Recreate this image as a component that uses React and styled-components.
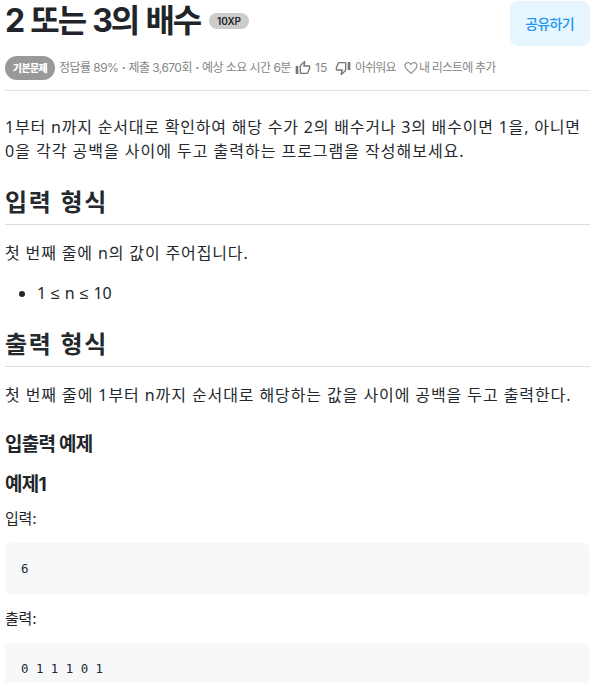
import styled, { createGlobalStyle } from 'styled-components'

const GlobalStyle = createGlobalStyle`
  * {
    box-sizing: border-box;
  }
  body {
    margin: 0;
    background: #fff;
    color: #24292e;
    overflow: hidden;
  }
`
const ui = `Inter, "Noto Sans CJK KR", sans-serif`
const prose = `"Noto Sans", "Noto Sans CJK KR", sans-serif`

const Page = styled.main`
  height: 683px;
  overflow: hidden;
  padding: 1px 1px 0 5px;
  font-family: ${ui};
`
const Header = styled.header`
  display: flex;
  justify-content: space-between;
  height: 55px;
`
const TitleRow = styled.div`
  display: flex;
  height: 40px;
`
const Title = styled.h1`
  margin: 0;
  width: 204px;
  color: #212529;
  font-size: 32px;
  font-weight: 700;
  line-height: 40px;
  letter-spacing: -2.1px;
  word-spacing: 1.8px;
  white-space: nowrap;
`
const XpBadge = styled.span`
  width: 40px;
  height: 16px;
  margin-top: 12px;
  border-radius: 8px;
  background: #ccc;
  color: #212529;
  font-size: 10px;
  font-weight: 600;
  line-height: 17px;
  text-align: center;
`
const ShareButton = styled.button`
  width: 80px;
  height: 45px;
  padding: 0 1px 2px 0;
  border: 0;
  border-radius: 8px;
  background: #e7f5ff;
  color: #2196f3;
  font-family: ${ui};
  font-size: 14px;
  font-weight: 500;
  letter-spacing: -0.7px;
`
const Meta = styled.div`
  display: flex;
  align-items: center;
  height: 35px;
  padding-bottom: 11px;
  border-bottom: 1px solid #dee2e6;
  color: #868686;
`
const LevelTag = styled.span`
  width: 50px;
  height: 24px;
  margin-right: 4px;
  border-radius: 12px;
  background: #999;
  color: #fff;
  font-size: 10px;
  font-weight: 900;
  line-height: 24px;
  letter-spacing: -0.6px;
  text-align: center;
`
const MetaText = styled.span`
  width: ${(p) => p.$width}px;
  font-size: 12px;
  line-height: 24px;
  letter-spacing: ${(p) => p.$spacing || 0}px;
  white-space: nowrap;
`
const Dot = styled.b`
  margin: 0 0.5px;
`
const MetaIcon = styled.svg`
  flex: none;
  width: 16px;
  height: 16px;
  margin-right: ${(p) => p.$gap}px;
  fill: ${(p) => p.$color || '#757575'};
`
const Article = styled.article`
  padding-top: 24px;
  font-family: ${prose};
`
const Paragraph = styled.p`
  margin: 0 0 16px;
  font-size: 16px;
  line-height: 24px;
  letter-spacing: 0.8px;
  white-space: nowrap;
`
const Line = styled.span`
  display: block;
  letter-spacing: ${(p) => p.$spacing}px;
`
const SectionTitle = styled.h2`
  height: 38px;
  margin: 24px 0 16px;
  border-bottom: 1px solid #d8dee4;
  font-size: 24px;
  font-weight: 700;
  line-height: 30px;
  letter-spacing: 1.7px;
`
const List = styled.ul`
  margin: 0 0 16px;
  padding-left: 32px;
  font-size: 16px;
  line-height: 24px;
`
const Sign = styled.span`
  margin: 0 0.8px;
  font-family: "Liberation Sans", sans-serif;
  line-height: 1;
`
const ExampleTitle = styled.h3`
  margin: 0 0 16px;
  color: #212529;
  font-size: 19px;
  font-weight: 700;
  line-height: 24px;
  letter-spacing: -0.75px;
`
const Examples = styled.section`
  padding-top: 10px;
`
const Label = styled.div`
  height: 24px;
  margin-top: -6px;
  color: #212529;
  font-size: 15px;
  line-height: 24px;
  letter-spacing: -0.2px;
`
const Sample = styled.pre`
  height: 52px;
  margin: 12px 0 18px;
  padding: 16px;
  border-radius: 6px;
  background: #f6f8fa;
  color: #24292e;
  font-family: "DejaVu Sans Mono", monospace;
  font-size: 12.4px;
  line-height: 20px;
`

export default function App() {
  return (
    <>
      <GlobalStyle />
      <Page>
        <Header>
          <TitleRow>
            <Title>2 또는 3의 배수</Title>
            <XpBadge>10XP</XpBadge>
          </TitleRow>
          <ShareButton>공유하기</ShareButton>
        </Header>
        <Meta>
          <LevelTag>기본문제</LevelTag>
          <MetaText $width={236} $spacing={-0.55}>
            정답률 89% <Dot>·</Dot> 제출 3,670회 <Dot>·</Dot> 예상 소요 시간 6분
          </MetaText>
          <MetaIcon $gap={4} viewBox="0 0 24 24">
            <path d="M9 21h9c.83 0 1.54-.5 1.84-1.22l3.02-7.05c.09-.23.14-.47.14-.73v-2c0-1.1-.9-2-2-2h-6.31l.95-4.57.03-.32c0-.41-.17-.79-.44-1.06L14.17 1 7.58 7.59C7.22 7.95 7 8.45 7 9v10c0 1.1.9 2 2 2zM9 9l4.34-4.34L12 10h9v2l-3 7H9V9zM1 9h4v12H1z" />
          </MetaIcon>
          <MetaText $width={20}>15</MetaText>
          <MetaIcon $gap={4} viewBox="0 0 24 24">
            <path d="M15 3H6c-.83 0-1.54.5-1.84 1.22l-3.02 7.05c-.09.23-.14.47-.14.73v2c0 1.1.9 2 2 2h6.31l-.95 4.57-.03.32c0 .41.17.79.44 1.06L9.83 23l6.59-6.59c.36-.36.58-.86.58-1.41V5c0-1.1-.9-2-2-2zm0 12l-4.34 4.34L12 14H3v-2l3-7h9v10zm4-12h4v12h-4z" />
          </MetaIcon>
          <MetaText $width={48} $spacing={-0.9}>아쉬워요</MetaText>
          <MetaIcon $gap={0} $color="#999" viewBox="0 0 24 24">
            <path d="M16.5 3c-1.74 0-3.41.81-4.5 2.09C10.91 3.81 9.24 3 7.5 3 4.42 3 2 5.42 2 8.5c0 3.78 3.4 6.86 8.55 11.54L12 21.35l1.45-1.32C18.6 15.36 22 12.28 22 8.5 22 5.42 19.58 3 16.5 3zm-4.4 15.55l-.1.1-.1-.1C7.14 14.24 4 11.39 4 8.5 4 6.5 5.5 5 7.5 5c1.54 0 3.04.99 3.57 2.36h1.87C13.46 5.99 14.96 5 16.5 5c2 0 3.5 1.5 3.5 3.5 0 2.89-3.14 5.74-7.9 10.05z" />
          </MetaIcon>
          <MetaText $width={80} $spacing={-0.85}>내 리스트에 추가</MetaText>
        </Meta>
        <Article>
          <Paragraph>
            <Line $spacing={0.8}>1부터 n까지 순서대로 확인하여 해당 수가 2의 배수거나 3의 배수이면 1을, 아니면</Line>
            <Line $spacing={0.98}>0을 각각 공백을 사이에 두고 출력하는 프로그램을 작성해보세요.</Line>
          </Paragraph>
          <SectionTitle>입력 형식</SectionTitle>
          <Paragraph>
            <Line $spacing={0.86}>첫 번째 줄에 n의 값이 주어집니다.</Line>
          </Paragraph>
          <List>
            <li>1 <Sign>≤</Sign> n <Sign>≤</Sign> 10</li>
          </List>
          <SectionTitle>출력 형식</SectionTitle>
          <Paragraph>
            <Line $spacing={0.91}>첫 번째 줄에 1부터 n까지 순서대로 해당하는 값을 사이에 공백을 두고 출력한다.</Line>
          </Paragraph>
        </Article>
        <Examples>
          <ExampleTitle>입출력 예제</ExampleTitle>
          <ExampleTitle>예제1</ExampleTitle>
          <Label>입력:</Label>
          <Sample>6</Sample>
          <Label>출력:</Label>
          <Sample>0 1 1 1 0 1</Sample>
        </Examples>
      </Page>
    </>
  )
}
